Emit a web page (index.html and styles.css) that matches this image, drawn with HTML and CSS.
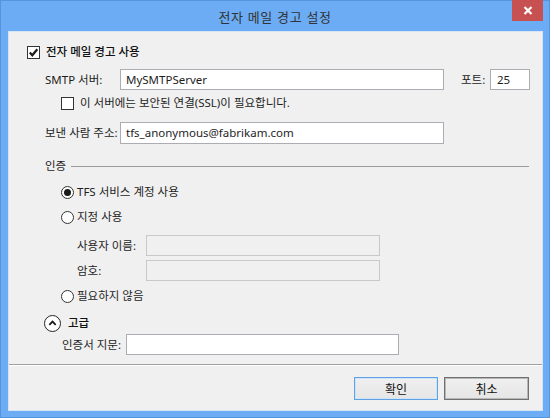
FILE: index.html
```html
<!DOCTYPE html>
<html lang="ko">
<head>
<meta charset="utf-8">
<link rel="stylesheet" href="styles.css">
</head>
<body>
<div class="window">
  <div class="titlebar">
    <div class="title">전자 메일 경고 설정</div>
    <div class="close"><svg width="10" height="9" viewBox="0 0 10 9"><path d="M1.5 1 L8.5 8 M8.5 1 L1.5 8" stroke="#fff" stroke-width="2.2" fill="none"/></svg></div>
  </div>
  <div class="content">
    <div class="row r1">
      <span class="check"><svg width="11" height="11" viewBox="0 0 11 11"><path d="M1.8 5.6 L4.3 8.3 L9.3 2.2" stroke="#1a1a1a" stroke-width="2.2" fill="none"/></svg></span>
      <span class="strong">전자 메일 경고 사용</span>
    </div>
    <div class="row r2 ind1">
      <span class="lbl w75">SMTP 서버:</span>
      <span class="input wide">MySMTPServer</span>
      <span class="lbl port">포트:</span>
      <span class="input portin">25</span>
    </div>
    <div class="row r3 ind2">
      <span class="check"></span>
      <span class="txt-ssl">이 서버에는 보안된 연결(SSL)이 필요합니다.</span>
    </div>
    <div class="row r4 ind1">
      <span class="lbl w75">보낸 사람 주소:</span>
      <span class="input wide">tfs_anonymous@fabrikam.com</span>
    </div>
    <div class="row r5 ind1">
      <span class="lbl">인증</span>
      <span class="rule"></span>
    </div>
    <div class="row r6 ind2">
      <span class="radio on"></span>
      <span>TFS 서비스 계정 사용</span>
    </div>
    <div class="row r7 ind2">
      <span class="radio"></span>
      <span>지정 사용</span>
    </div>
    <div class="row r8 ind3">
      <span class="lbl w69">사용자 이름:</span>
      <span class="input dis"></span>
    </div>
    <div class="row r9 ind3">
      <span class="lbl w69">암호:</span>
      <span class="input dis"></span>
    </div>
    <div class="row r10 ind2">
      <span class="radio"></span>
      <span>필요하지 않음</span>
    </div>
    <div class="row r11 ind0">
      <span class="expander"><svg width="9" height="6" viewBox="0 0 9 6"><path d="M1.3 4.8 L4.5 1.6 L7.7 4.8" stroke="#1a1a1a" stroke-width="1.8" fill="none"/></svg></span>
      <span class="strong">고급</span>
    </div>
    <div class="row r12 indc">
      <span class="lbl w64">인증서 지문:</span>
      <span class="input cert"></span>
    </div>
    <div class="sep"></div>
    <div class="buttons">
      <span class="btn ok">확인</span>
      <span class="btn cancel">취소</span>
    </div>
  </div>
</div>
</body>
</html>
```
FILE: styles.css
```css
* { box-sizing: border-box; }
html, body { margin: 0; padding: 0; }
body {
  width: 550px;
  height: 418px;
  overflow: hidden;
  font-family: "Noto Sans", "Noto Sans CJK KR", sans-serif;
  font-size: 11.5px;
  color: #1e1e1e;
}
.window {
  width: 550px;
  height: 418px;
  background: #6cacf4;
  border: 1px solid #5594de;
  display: flex;
  flex-direction: column;
}
.titlebar {
  height: 30px;
  position: relative;
  display: flex;
  align-items: center;
  justify-content: center;
}
.title {
  font-family: "Noto Sans CJK KR", sans-serif;
  font-size: 13px;
  color: #333;
  margin-top: 1px;
  letter-spacing: 0.6px;
}
.close {
  position: absolute;
  top: -1px;
  right: 6px;
  width: 31px;
  height: 21px;
  background: #c75050;
  display: flex;
  align-items: center;
  justify-content: center;
}
.content {
  margin-left: 7px;
  width: 535px;
  height: 380px;
  background: #f0f0f0;
  border: 1px solid #d6e4f4;
  padding: 10px 13px 0 18px;
  display: flex;
  flex-direction: column;
}
.row {
  display: flex;
  align-items: center;
  height: 20px;
  line-height: 16px;
  white-space: nowrap;
}
.ind1 { padding-left: 18px; }
.ind2 { padding-left: 34px; }
.ind3 { padding-left: 50px; }
.ind0 { padding-left: 17px; }
.indc { padding-left: 35px; }
.r2 { margin-top: 7px; height: 21px; }
.r3 { margin-top: 3px; }
.r4 { margin-top: 9px; height: 22px; }
.r5 { margin-top: 12px; }
.r6 { margin-top: 6px; }
.r7 { margin-top: 5px; }
.r8 { margin-top: 8px; height: 21px; }
.r9 { margin-top: 4px; height: 21px; }
.r10 { margin-top: 5px; }
.r11 { margin-top: 7px; }
.r12 { margin-top: 1px; height: 21px; }
.strong { font-weight: 500; color: #111; }
.check {
  width: 13px;
  height: 13px;
  border: 1px solid #333;
  background: #fff;
  margin-right: 6px;
  display: flex;
  align-items: center;
  justify-content: center;
  flex: none;
}
.lbl { flex: none; }
.w75 { width: 75px; }
.w69 { width: 69px; }
.w64 { width: 64px; }
.input {
  height: 100%;
  border: 1px solid #abadb3;
  background: #fff;
  padding: 0 5px;
  display: flex;
  align-items: center;
  flex: none;
}
.wide { width: 324px; }
.port { margin-left: 17px; width: 29px; }
.portin { width: 40px; padding-left: 6px; }
.dis { width: 234px; background: #f0f0f0; border-color: #c8c8c8; }
.cert { width: 273px; }
.rule {
  flex: 1;
  height: 1px;
  background: #9a9a9a;
  margin-left: 5px;
}
.radio {
  width: 13px;
  height: 13px;
  border: 1px solid #333;
  border-radius: 50%;
  background: #fff;
  margin-right: 3px;
  flex: none;
  display: flex;
  align-items: center;
  justify-content: center;
}
.radio.on::after {
  content: "";
  width: 7px;
  height: 7px;
  border-radius: 50%;
  background: #1a1a1a;
}
.expander {
  width: 17px;
  height: 17px;
  border: 1.5px solid #222;
  border-radius: 50%;
  background: #fff;
  margin-right: 7px;
  display: flex;
  align-items: center;
  justify-content: center;
  flex: none;
}
.sep {
  margin: 9px -13px 0 -18px;
  height: 2px;
  border-top: 1px solid #a0a0a0;
  border-bottom: 1px solid #ffffff;
}
.buttons {
  margin-top: 11px;
  display: flex;
  justify-content: flex-end;
  gap: 6px;
}
.btn {
  height: 23px;
  display: flex;
  align-items: center;
  justify-content: center;
  background: linear-gradient(#f0f0f0, #e5e5e5);
  font-family: "Noto Sans CJK KR", sans-serif;
  font-size: 12px;
  color: #111;
}
.ok {
  width: 84px;
  border: 1px solid #5fa1e3;
  box-shadow: inset 0 0 0 1px #cfe4f8;
}
.cancel {
  width: 85px;
  border: 1px solid #707070;
  box-shadow: inset 0 0 0 1px #b8b8b8;
}
```
